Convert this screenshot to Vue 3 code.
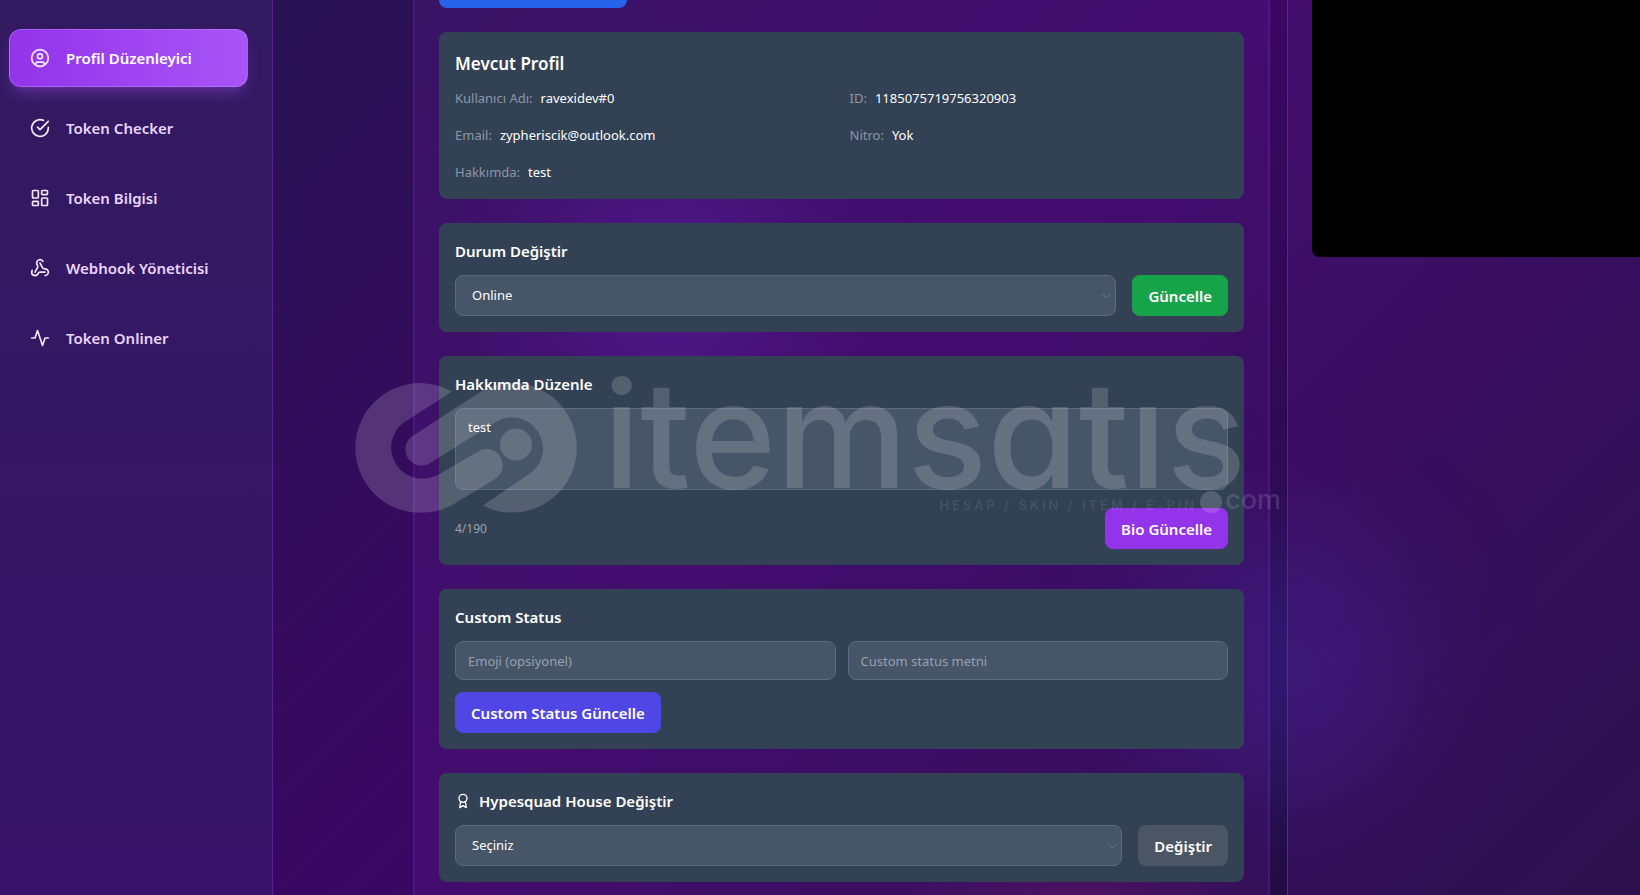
<script setup>
import { ref } from 'vue'

const nav = [
  { label: 'Profil Düzenleyici', icon: 'user', active: true },
  { label: 'Token Checker', icon: 'check' },
  { label: 'Token Bilgisi', icon: 'grid' },
  { label: 'Webhook Yöneticisi', icon: 'webhook' },
  { label: 'Token Onliner', icon: 'activity' },
]

const profile = [
  { label: 'Kullanıcı Adı:', value: 'ravexidev#0' },
  { label: 'ID:', value: '1185075719756320903' },
  { label: 'Email:', value: 'zypheriscik@outlook.com' },
  { label: 'Nitro:', value: 'Yok' },
  { label: 'Hakkımda:', value: 'test' },
]

const status = ref('Online')
const bio = ref('test')
const emoji = ref('')
const statusText = ref('')
const house = ref('Seçiniz')
</script>

<template>
  <div class="page">
    <div class="glow glow-purple"></div>
    <div class="glow glow-indigo"></div>
    <div class="glow glow-pink"></div>

    <nav class="sidebar">
      <a v-for="item in nav" :key="item.label" href="#" class="nav-item" :class="{ active: item.active }">
        <svg class="icon" viewBox="0 0 24 24">
          <template v-if="item.icon === 'user'">
            <circle cx="12" cy="12" r="10" />
            <circle cx="12" cy="10" r="3" />
            <path d="M7 20.662V19a2 2 0 0 1 2-2h6a2 2 0 0 1 2 2v1.662" />
          </template>
          <template v-else-if="item.icon === 'check'">
            <path d="M22 11.080V12a10 10 0 1 1-5.930-9.140" />
            <path d="m9 11 3 3L22 4" />
          </template>
          <template v-else-if="item.icon === 'grid'">
            <rect x="3" y="3" width="7" height="9" rx="1" />
            <rect x="14" y="3" width="7" height="5" rx="1" />
            <rect x="14" y="12" width="7" height="9" rx="1" />
            <rect x="3" y="16" width="7" height="5" rx="1" />
          </template>
          <template v-else-if="item.icon === 'webhook'">
            <path d="M18 16.980h-5.990c-1.100 0-1.950.94-2.480 1.900A4 4 0 0 1 2 17c.01-.7.2-1.400.57-2" />
            <path d="m6 17 3.130-5.780c.53-.97.1-2.180-.5-3.100a4 4 0 1 1 6.890-4.060" />
            <path d="m12 6 3.130 5.730C15.660 12.700 16.900 13 18 13a4 4 0 0 1 0 8" />
          </template>
          <path v-else d="M22 12h-4l-3 9L9 3l-3 9H2" />
        </svg>
        <span>{{ item.label }}</span>
      </a>
    </nav>

    <main class="main">
      <div class="panel">
        <button class="btn load" type="button" aria-label="Profil"></button>

        <section class="card">
          <h3 class="title">Mevcut Profil</h3>
          <dl class="facts">
            <div v-for="fact in profile" :key="fact.label" class="fact">
              <dt>{{ fact.label }}</dt>
              <dd>{{ fact.value }}</dd>
            </div>
          </dl>
        </section>

        <section class="card">
          <h4 class="heading"><label for="status">Durum Değiştir</label></h4>
          <div class="row">
            <div class="select-wrap">
              <select id="status" v-model="status" class="field select">
                <option>Online</option>
              </select>
              <svg class="chevron" viewBox="0 0 10 6"><path d="M1 1l4 4 4-4" /></svg>
            </div>
            <button class="btn green" type="button">Güncelle</button>
          </div>
        </section>

        <section class="card">
          <h4 class="heading"><label for="bio">Hakkımda Düzenle</label></h4>
          <textarea id="bio" v-model="bio" class="field area" maxlength="190"></textarea>
          <div class="row between">
            <span class="counter">{{ bio.length }}/190</span>
            <button class="btn purple" type="button">Bio Güncelle</button>
          </div>
        </section>

        <section class="card">
          <h4 class="heading">Custom Status</h4>
          <div class="pair">
            <input v-model="emoji" class="field" type="text" placeholder="Emoji (opsiyonel)" aria-label="Emoji" />
            <input v-model="statusText" class="field" type="text" placeholder="Custom status metni" aria-label="Custom status metni" />
          </div>
          <button class="btn indigo" type="button">Custom Status Güncelle</button>
        </section>

        <section class="card">
          <h4 class="heading">
            <svg class="award" viewBox="0 0 24 24">
              <circle cx="12" cy="8" r="6" />
              <path d="M15.477 12.890 17 22l-5-3-5 3 1.523-9.110" />
            </svg>
            <label for="house">Hypesquad House Değiştir</label>
          </h4>
          <div class="row">
            <div class="select-wrap">
              <select id="house" v-model="house" class="field select">
                <option>Seçiniz</option>
              </select>
              <svg class="chevron" viewBox="0 0 10 6"><path d="M1 1l4 4 4-4" /></svg>
            </div>
            <button class="btn gray" type="button">Değiştir</button>
          </div>
        </section>
      </div>
    </main>

    <aside class="aside">
      <div class="preview"></div>
    </aside>

    <div class="watermark">
      <svg class="mark" viewBox="0 0 218 130">
        <path d="M93 8.500A64.800 64.800 0 1 0 64.800 129.600C76 129.600 86 126 95 121L136 96A16 16 0 0 0 119 68.500L84 89C78 93 71 95.500 64.500 95.500A31 31 0 0 1 48 37.500Z" />
        <path d="M53 53.500L118 11C129 3.500 141 0 153 0A64.800 64.800 0 0 1 153 129.600C142 129.600 132 127 124 122.500L170 91C179 85 184 76 184 65.500A31 31 0 0 0 153 34.500C147 34.500 141 36.500 136 39.500L72 79.500A16 16 0 0 1 53 53.500Z" />
        <circle cx="157" cy="61.500" r="16" />
      </svg>
      <div class="words">
        <div class="word">itemsatıs</div>
        <div class="sub">
          <span class="tagline">HESAP / SKIN / ITEM / E-PIN</span>
          <span class="dot"></span>
          <span class="domain">com</span>
        </div>
      </div>
    </div>
  </div>
</template>

<style>
body {
  margin: 0;
  background: #1e1b4b;
}
</style>

<style scoped>
* {
  box-sizing: border-box;
}

.page {
  position: relative;
  display: flex;
  min-height: 100vh;
  overflow: hidden;
  background: linear-gradient(135deg, #23164e 0%, #3b0764 50%, #190f36 100%);
  color: #fff;
  font-family: "Segoe UI", "Noto Sans", "Open Sans", sans-serif;
  font-size: 15px;
  line-height: 24px;
}

.glow {
  position: absolute;
  width: 256px;
  height: 256px;
  border-radius: 50%;
  filter: blur(64px);
}

.glow-purple {
  left: 33%;
  top: 150px;
  background: rgba(124, 58, 237, 0.28);
}

.glow-indigo {
  right: 14%;
  top: 540px;
  background: rgba(67, 56, 202, 0.3);
}

.glow-pink {
  left: 58%;
  top: 860px;
  background: rgba(219, 39, 119, 0.25);
}

.sidebar {
  position: relative;
  flex: none;
  display: flex;
  flex-direction: column;
  gap: 12px;
  width: 273px;
  padding: 29px 24px 0 9px;
  border-right: 1px solid #592491;
  background: linear-gradient(180deg, #321a60, #371469);
}

.nav-item {
  display: flex;
  align-items: center;
  gap: 16px;
  height: 58px;
  padding: 0 20px;
  border: 1px solid transparent;
  border-radius: 12px;
  color: #e9d5ff;
  font-weight: 600;
  text-decoration: none;
}

.nav-item.active {
  border-color: rgba(192, 132, 252, 0.5);
  background: linear-gradient(90deg, #9333ea, #a855f7);
  box-shadow: 0 10px 15px -3px rgba(168, 85, 247, 0.3), 0 4px 6px -4px rgba(168, 85, 247, 0.3);
  color: #fff;
}

.icon,
.award,
.chevron {
  flex: none;
  fill: none;
  stroke: currentColor;
  stroke-width: 2;
  stroke-linecap: round;
  stroke-linejoin: round;
}

.icon {
  width: 20px;
  height: 20px;
  color: #f3e8ff;
}

.main {
  position: relative;
  display: flex;
  flex: 1;
  min-width: 0;
  padding: 0 17px 0 140px;
}

.panel {
  flex: 1;
  display: flex;
  flex-direction: column;
  gap: 24px;
  min-width: 0;
  padding: 0 24px;
  border: solid rgba(147, 51, 234, 0.2);
  border-width: 0 2px;
  background: rgba(88, 28, 135, 0.3);
}

.card {
  padding: 16px;
  border-radius: 8px;
  background: #334155;
}

.title,
.heading {
  display: flex;
  align-items: center;
  gap: 8px;
  margin: 0 0 12px;
  font-weight: 600;
}

.title {
  margin-bottom: 8px;
  font-size: 17px;
  line-height: 32px;
}

.heading {
  font-size: 15px;
  line-height: 24px;
}

.award {
  width: 16px;
  height: 16px;
}

.facts {
  display: grid;
  grid-template-columns: 1fr 1fr;
  gap: 16px;
  margin: 0;
  font-size: 13px;
  line-height: 21px;
}

.fact {
  display: flex;
  gap: 8px;
}

.fact dt {
  color: #8d96a4;
}

.fact dd {
  margin: 0;
}

.row {
  display: flex;
  align-items: center;
  gap: 16px;
}

.between {
  justify-content: space-between;
}

.pair {
  display: grid;
  grid-template-columns: 1fr 1fr;
  gap: 12px;
  margin-bottom: 12px;
}

.field {
  display: block;
  width: 100%;
  height: 39px;
  margin: 0;
  padding: 0 12px;
  border: 1px solid #5a6a80;
  border-radius: 8px;
  outline: none;
  background: #475569;
  color: #fff;
  font: inherit;
  font-size: 13px;
  line-height: 21px;
}

.field::placeholder {
  color: #97a0ae;
  opacity: 1;
}

.select-wrap {
  position: relative;
  flex: 1;
  min-width: 0;
}

.select {
  height: 41px;
  padding: 0 16px;
  appearance: none;
}

.chevron {
  position: absolute;
  top: 18px;
  right: 5px;
  width: 9px;
  height: 6px;
  color: #7d8088;
  stroke-width: 1;
}

.area {
  height: 82px;
  margin-bottom: 18px;
  padding: 8px 12px;
  resize: none;
}

.counter {
  color: #9ca3af;
  font-size: 12px;
  line-height: 18px;
}

.btn {
  flex: none;
  height: 41px;
  padding: 0 16px;
  border: 0;
  border-radius: 8px;
  color: #fff;
  font: inherit;
  font-weight: 600;
}

.load {
  width: 188px;
  height: 8px;
  border-radius: 0 0 8px 8px;
  background: #2563eb;
}

.green {
  background: #16a34a;
}

.purple {
  background: #9333ea;
}

.indigo {
  background: #4f46e5;
}

.gray {
  background: #4b5563;
}

.aside {
  position: relative;
  flex: none;
  width: 353px;
  padding-left: 24px;
  border-left: 1px solid rgba(168, 85, 247, 0.3);
  background: rgba(88, 28, 135, 0.3);
}

.preview {
  height: 257px;
  border-radius: 0 0 0 8px;
  background: #000;
}

.watermark {
  position: absolute;
  inset: 0;
  display: flex;
  align-items: center;
  justify-content: center;
  gap: 26px;
  opacity: 0.16;
  pointer-events: none;
  font-family: Inter, sans-serif;
}

.mark {
  flex: none;
  width: 218px;
  height: 130px;
  overflow: visible;
  fill: #fff;
}

.words {
  flex: none;
  width: 678px;
}

.word {
  font-size: 148px;
  font-weight: 500;
  font-feature-settings: "cv11";
  line-height: 106px;
}

.sub {
  display: flex;
  align-items: flex-end;
  justify-content: flex-end;
  gap: 3px;
  height: 25px;
}

.tagline {
  font-size: 13px;
  font-weight: 500;
  letter-spacing: 3px;
  line-height: 16px;
  opacity: 0.6;
}

.dot {
  width: 22px;
  height: 22px;
  border-radius: 50%;
  background: #fff;
}

.domain {
  font-size: 27px;
  font-weight: 500;
  line-height: 26px;
  opacity: 0.8;
}
</style>
